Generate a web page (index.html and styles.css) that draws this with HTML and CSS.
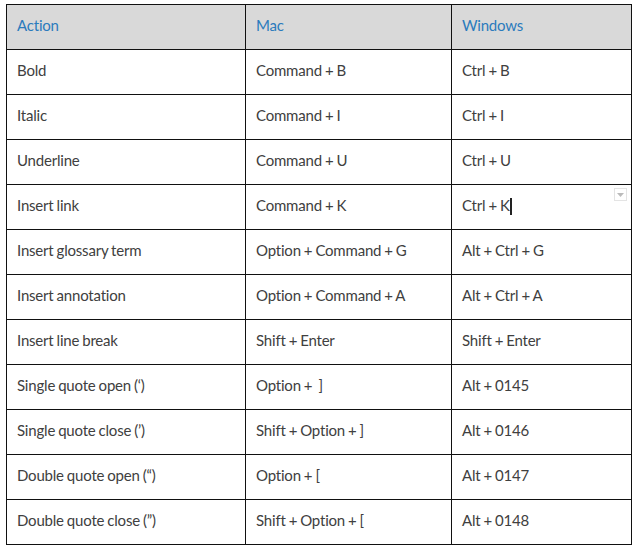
FILE: index.html
```html
<!DOCTYPE html>
<html>
<head>
<meta charset="utf-8">
<link rel="stylesheet" href="styles.css">
</head>
<body>
<table class="shortcuts">
  <colgroup>
    <col class="c1"><col class="c2"><col class="c3">
  </colgroup>
  <thead>
    <tr><th>Action</th><th>Mac</th><th>Windows</th></tr>
  </thead>
  <tbody>
    <tr><td>Bold</td><td>Command + B</td><td>Ctrl + B</td></tr>
    <tr><td>Italic</td><td>Command + I</td><td>Ctrl + I</td></tr>
    <tr><td>Underline</td><td>Command + U</td><td>Ctrl + U</td></tr>
    <tr><td>Insert link</td><td>Command + K</td><td class="active">Ctrl + K<span class="caret"></span><span class="dd"><svg width="9" height="6" viewBox="0 0 9 6"><path d="M1 1 L8 1 L4.5 5 Z" fill="#bbb"/></svg></span></td></tr>
    <tr><td>Insert glossary term</td><td>Option + Command + G</td><td>Alt + Ctrl + G</td></tr>
    <tr><td>Insert annotation</td><td>Option + Command + A</td><td>Alt + Ctrl + A</td></tr>
    <tr><td>Insert line break</td><td>Shift + Enter</td><td>Shift + Enter</td></tr>
    <tr><td>Single quote open (‘)</td><td>Option + &nbsp;]</td><td>Alt + 0145</td></tr>
    <tr><td>Single quote close (’)</td><td>Shift + Option + ]</td><td>Alt + 0146</td></tr>
    <tr><td>Double quote open (“)</td><td>Option + [</td><td>Alt + 0147</td></tr>
    <tr><td>Double quote close (”)</td><td>Shift + Option + [</td><td>Alt + 0148</td></tr>
  </tbody>
</table>
</body>
</html>
```
FILE: styles.css
```css
html, body {
  margin: 0;
  padding: 0;
  background: #ffffff;
}
body {
  padding: 4px 0 0 6px;
  font-family: Lato, "Open Sans", sans-serif;
}
.shortcuts {
  border-collapse: collapse;
  table-layout: fixed;
  width: 625px;
  font-size: 15px;
  letter-spacing: -0.2px;
  word-spacing: -0.6px;
  color: #404040;
}
.c1 { width: 239px; }
.c2 { width: 206px; }
.c3 { width: 180px; }
.shortcuts th,
.shortcuts td {
  border: 1px solid #111;
  height: 45px;
  padding: 0 10px 4px;
  text-align: left;
  vertical-align: middle;
  box-sizing: border-box;
  white-space: nowrap;
}
.shortcuts th {
  background: #d9d9d9;
  color: #2b7bbd;
  font-weight: normal;
}
.shortcuts td.active {
  position: relative;
}
.caret {
  display: inline-block;
  width: 2px;
  height: 17px;
  background: #222;
  vertical-align: -4px;
}
.dd {
  position: absolute;
  right: 4px;
  top: 3px;
  width: 11px;
  height: 11px;
  border: 1px solid #e4e4e4;
  background: #fff;
  display: flex;
  align-items: center;
  justify-content: center;
}
```
